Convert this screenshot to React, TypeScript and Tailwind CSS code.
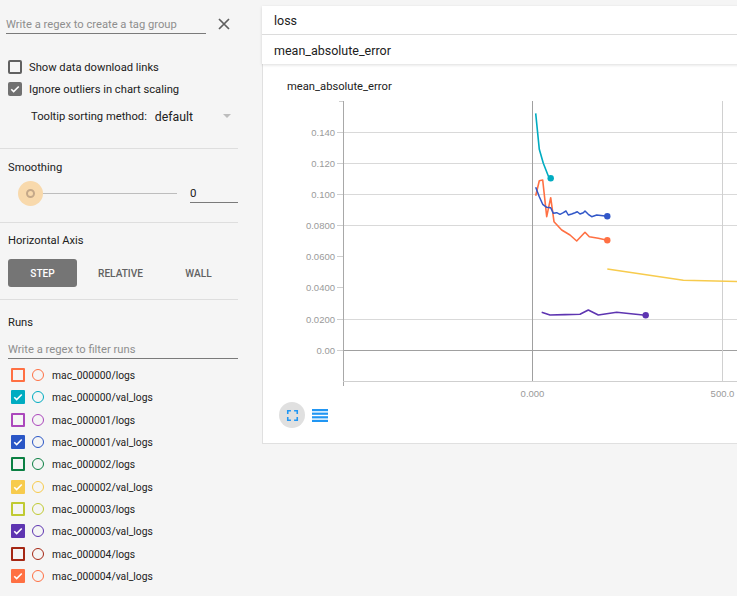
import React from 'react';

type Run = { name: string; color: string; checked: boolean };

const runs: Run[] = [
  { name: 'mac_000000/logs', color: '#ff7043', checked: false },
  { name: 'mac_000000/val_logs', color: '#00acc1', checked: true },
  { name: 'mac_000001/logs', color: '#ab47bc', checked: false },
  { name: 'mac_000001/val_logs', color: '#2a56c6', checked: true },
  { name: 'mac_000002/logs', color: '#0b8043', checked: false },
  { name: 'mac_000002/val_logs', color: '#f7cb4d', checked: true },
  { name: 'mac_000003/logs', color: '#c0ca33', checked: false },
  { name: 'mac_000003/val_logs', color: '#5e35b1', checked: true },
  { name: 'mac_000004/logs', color: '#a52714', checked: false },
  { name: 'mac_000004/val_logs', color: '#ff7043', checked: true },
];

function Check() {
  return (
    <svg width="12" height="12" viewBox="0 0 24 24">
      <path d="M4.5 12.5l4.8 4.8L19.5 7" fill="none" stroke="#fff" strokeWidth="3.2" />
    </svg>
  );
}

function GrayBox({ checked }: { checked: boolean }) {
  return checked ? (
    <div className="w-[14px] h-[14px] rounded-[2px] bg-[#717171] flex items-center justify-center">
      <Check />
    </div>
  ) : (
    <div className="w-[14px] h-[14px] rounded-[2px] border-2 border-[#616161]" />
  );
}

function RunRow({ run }: { run: Run }) {
  return (
    <div className="flex items-center h-[22.3px] pl-[11px]">
      {run.checked ? (
        <div
          className="w-[14px] h-[14px] rounded-[1px] flex items-center justify-center"
          style={{ backgroundColor: run.color }}
        >
          <Check />
        </div>
      ) : (
        <div className="w-[14px] h-[14px] rounded-[1px] border-2" style={{ borderColor: run.color }} />
      )}
      <div className="ml-[7px] w-[12px] h-[12px] rounded-full border-[1.5px]" style={{ borderColor: run.color }} />
      <div className="ml-[8px] pt-[2px] text-[10.3px] leading-[14px] text-[#212121]">{run.name}</div>
    </div>
  );
}

function Chart() {
  const gridY = [132.5, 163.5, 194.5, 225.5, 319.5];
  const labels: [string, number][] = [
    ['0.140', 132.5],
    ['0.120', 163.5],
    ['0.100', 194.5],
    ['0.0800', 225.5],
    ['0.0600', 256.5],
    ['0.0400', 287.5],
    ['0.0200', 319.5],
    ['0.00', 350.5],
  ];
  const cyan = 'M535.7 113.3 L539.3 149.3 L543.3 163.3 L548.3 176 L550.7 178.3';
  const blue =
    'M535.7 187.3 L539.3 196.7 L542.7 204.3 L546.7 207.3 L550.7 207.7 L553.3 213.3 L556.7 212.7 L560 214.3 L563.3 212.7 L566 211 L568.3 215 L571.7 214 L575 212.7 L577.3 211.7 L580 214 L583.3 212.7 L585 211 L588.3 214.3 L591.7 216.7 L596.7 215 L607.3 216.3';
  const orange =
    'M535.7 195.7 L539.3 180.7 L542.7 180 L546.7 216.7 L550.7 197.7 L554 221.7 L561.7 230 L570 235 L576.7 241 L585 232.3 L589.3 236.7 L598.3 238.3 L607.3 240.3';
  const yellow = 'M607.3 269 L683.3 280.3 L745 281.7';
  const purple =
    'M541.7 312.3 L550 315 L565 314.6 L580 314.3 L588.3 310 L598.3 315 L616.7 312.3 L633.3 314 L645.7 315.3';
  const font = "'Liberation Sans', Arial, sans-serif";
  return (
    <svg width="477" height="308" viewBox="263 94 477 308" className="block">
      {gridY.map((y) => (
        <line key={y} x1="343" x2="745" y1={y} y2={y} stroke="#d9d9d9" strokeWidth="1" />
      ))}
      <line x1="343" x2="745" y1="350.5" y2="350.5" stroke="#a0a0a0" strokeWidth="1" />
      <line x1="722.5" x2="722.5" y1="101" y2="381" stroke="#d0d0d0" strokeWidth="1" />
      <line x1="532.5" x2="532.5" y1="101" y2="381" stroke="#a0a0a0" strokeWidth="1" />
      <line x1="343.5" x2="343.5" y1="101" y2="386" stroke="#a8a8a8" strokeWidth="1" />
      <line x1="343" x2="745" y1="381.5" y2="381.5" stroke="#cfcfcf" strokeWidth="1" />
      <line x1="339" x2="343" y1="101.5" y2="101.5" stroke="#cfcfcf" strokeWidth="1" />
      {labels.map(([t, y]) => (
        <g key={t}>
          <line x1="337" x2="343" y1={y} y2={y} stroke="#cfcfcf" strokeWidth="1" />
          <text x="335" y={y + 3.3} textAnchor="end" fontFamily={font} fontSize="9.5" fill="#9a9a9a">
            {t}
          </text>
        </g>
      ))}
      <text x="532.5" y="396.5" textAnchor="middle" fontFamily={font} fontSize="9.5" fill="#9a9a9a">
        0.000
      </text>
      <text x="722.5" y="396.5" textAnchor="middle" fontFamily={font} fontSize="9.5" fill="#9a9a9a">
        500.0
      </text>
      <path d={yellow} fill="none" stroke="#f7cb4d" strokeWidth="1.6" />
      <path d={purple} fill="none" stroke="#5e35b1" strokeWidth="1.6" strokeLinejoin="round" />
      <path d={orange} fill="none" stroke="#ff7043" strokeWidth="1.6" strokeLinejoin="round" />
      <path d={blue} fill="none" stroke="#3157c8" strokeWidth="1.5" strokeLinejoin="round" />
      <path d={cyan} fill="none" stroke="#00acc1" strokeWidth="1.6" strokeLinejoin="round" />
      <circle cx="550.7" cy="178.3" r="3.2" fill="#00acc1" />
      <circle cx="607.3" cy="216.3" r="3.2" fill="#3157c8" />
      <circle cx="607.3" cy="240.3" r="3.2" fill="#ff7043" />
      <circle cx="645.7" cy="315.3" r="3.2" fill="#5e35b1" />
    </svg>
  );
}

export default function App() {
  return (
    <div className="w-[737px] h-[596px] overflow-hidden bg-[#f5f5f5] flex font-['Roboto',sans-serif] text-[#212121]">
      <aside className="w-[238px] shrink-0 flex flex-col">
        {/* tag group input */}
        <div className="flex items-center pt-[15px]">
          <div className="ml-[6px] w-[200px] border-b border-[#7a7a7a] pt-[1px] text-[11.2px] leading-[17px] text-[#8e8e8e] whitespace-nowrap">
            Write a regex to create a tag group
          </div>
          <svg className="ml-[12px] mb-[1px]" width="12" height="12" viewBox="0 0 12 12">
            <path d="M1 1L11 11M11 1L1 11" stroke="#5f5f5f" strokeWidth="1.7" />
          </svg>
        </div>

        <div className="mt-[22px] flex items-center h-[22px] pl-[8px]">
          <GrayBox checked={false} />
          <span className="ml-[7px] pt-[2px] text-[11.2px] leading-[14px]">Show data download links</span>
        </div>
        <div className="flex items-center h-[22px] pl-[8px]">
          <GrayBox checked={true} />
          <span className="ml-[7px] pt-[2px] text-[11.2px] leading-[14px]">Ignore outliers in chart scaling</span>
        </div>
        <div className="mt-[5px] flex items-center h-[22px] pl-[31px]">
          <span className="pt-[2px] text-[11.2px] leading-[14px]">Tooltip sorting method:</span>
          <div className="ml-[8px] w-[79px] flex items-center justify-between">
            <span className="pt-[2px] text-[12.3px] leading-[16px]">default</span>
            <svg className="mr-[3px]" width="8" height="4" viewBox="0 0 8 4">
              <path d="M0 0H8L4 4Z" fill="#bdbdbd" />
            </svg>
          </div>
        </div>

        <div className="mt-[21px] border-t border-[#dedede]" />

        {/* smoothing */}
        <div className="pt-[12px] pl-[8px] text-[11.2px] leading-[14px]">Smoothing</div>
        <div className="mt-[5px] flex items-center h-[26px] pl-[18px]">
          <div className="relative w-[159px] h-[26px]">
            <div className="absolute left-[12px] right-0 top-[13px] h-px bg-[#bdbdbd]" />
            <div className="absolute left-0 top-[0.5px] w-[25px] h-[25px] rounded-full bg-[#f8d9ac] flex items-center justify-center">
              <div className="w-[9px] h-[9px] rounded-full border-2 border-[#c4a889]" />
            </div>
          </div>
          <div className="ml-[13px] w-[48px] h-[20px] border-b border-[#7a7a7a] pt-[2px] text-[11.5px] leading-[17px]">0</div>
        </div>

        <div className="mt-[16px] border-t border-[#dedede]" />

        {/* horizontal axis */}
        <div className="pt-[11px] pl-[8px] text-[11.2px] leading-[14px]">Horizontal Axis</div>
        <div className="mt-[11px] pl-[8px] flex gap-[9px]">
          <div className="w-[69px] h-[28px] pt-[2px] rounded-[3px] bg-[#757575] text-white flex items-center justify-center text-[10.1px] font-medium">
            STEP
          </div>
          <div className="w-[69px] h-[28px] pt-[2px] flex items-center justify-center text-[10.1px] font-medium text-[#616161]">
            RELATIVE
          </div>
          <div className="w-[69px] h-[28px] pt-[2px] flex items-center justify-center text-[10.1px] font-medium text-[#616161]">
            WALL
          </div>
        </div>

        <div className="mt-[12px] border-t border-[#dedede]" />

        {/* runs */}
        <div className="pt-[16px] pl-[8px] text-[11.2px] leading-[14px]">Runs</div>
        <div className="mt-[11px] ml-[8px] w-[230px] border-b border-[#7a7a7a] pt-[2px] pb-[1px] text-[11.2px] leading-[14px] text-[#8e8e8e]">
          Write a regex to filter runs
        </div>
        <div className="mt-[5px] flex flex-col">
          {runs.map((r) => (
            <RunRow key={r.name} run={r} />
          ))}
        </div>
      </aside>

      <main className="flex-1 min-w-0 pl-[24px] pt-[6px]">
        <div className="w-[520px]">
          <div className="shadow-[0_1px_3px_rgba(0,0,0,0.14)] relative z-10">
            <div className="h-[29px] bg-white border-b border-[#dcdcdc] flex items-center px-[12px] pt-[3px] text-[12.5px]">loss</div>
            <div className="h-[29px] bg-white flex items-center px-[12px] pt-[3px] text-[12.5px]">mean_absolute_error</div>
          </div>
          <div className="h-[380px] bg-white border-l border-b border-[#e0e0e0] flex flex-col">
            <div className="pt-[16px] pl-[24px] text-[11.2px] leading-[14px]">mean_absolute_error</div>
            <Chart />
            <div className="flex items-center ml-[16px]">
              <div className="w-[26px] h-[26px] rounded-full bg-[#e0e0e0] flex items-center justify-center">
                <svg width="19" height="19" viewBox="0 0 24 24">
                  <path
                    d="M7 14H5v5h5v-2H7v-3zm-2-4h2V7h3V5H5v5zm12 7h-3v2h5v-5h-2v3zM14 5v2h3v3h2V5h-5z"
                    fill="#2196f3"
                  />
                </svg>
              </div>
              <svg className="ml-[7px]" width="16" height="13" viewBox="0 0 16 13">
                <rect x="0" y="0" width="16" height="2.2" fill="#2196f3" />
                <rect x="0" y="3.6" width="16" height="2.2" fill="#2196f3" />
                <rect x="0" y="7.2" width="16" height="2.2" fill="#2196f3" />
                <rect x="0" y="10.8" width="16" height="2.2" fill="#2196f3" />
              </svg>
            </div>
          </div>
        </div>
      </main>
    </div>
  );
}
